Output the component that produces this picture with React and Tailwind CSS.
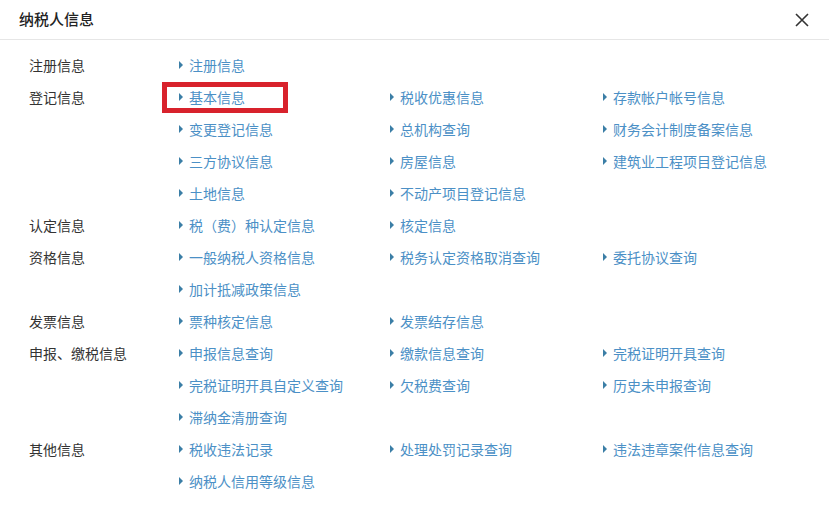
import React from 'react';

// ── Data ──────────────────────────────────────────────────────────────────────
const SECTIONS = [
  { title: '注册信息', items: ['注册信息'] },
  {
    title: '登记信息',
    items: [
      '基本信息', '税收优惠信息', '存款帐户帐号信息',
      '变更登记信息', '总机构查询', '财务会计制度备案信息',
      '三方协议信息', '房屋信息', '建筑业工程项目登记信息',
      '土地信息', '不动产项目登记信息',
    ],
  },
  { title: '认定信息', items: ['税（费）种认定信息', '核定信息'] },
  { title: '资格信息', items: ['一般纳税人资格信息', '税务认定资格取消查询', '委托协议查询', '加计抵减政策信息'] },
  { title: '发票信息', items: ['票种核定信息', '发票结存信息'] },
  {
    title: '申报、缴税信息',
    items: [
      '申报信息查询', '缴款信息查询', '完税证明开具查询',
      '完税证明开具自定义查询', '欠税费查询', '历史未申报查询',
      '滞纳金清册查询',
    ],
  },
  { title: '其他信息', items: ['税收违法记录', '处理处罚记录查询', '违法违章案件信息查询', '纳税人信用等级信息'] },
];

// ── Link item ─────────────────────────────────────────────────────────────────
function Item({ label }) {
  const active = label === '基本信息';
  return (
    <div className="h-8 flex items-center">
      <div
        className={`flex items-center ${
          active ? 'h-[31px] w-[126px] border-[5px] border-[#d8222c] -ml-[17px] pl-[12px]' : ''
        }`}
      >
        <span className="w-0 h-0 border-y-[4px] border-y-transparent border-l-[4px] border-l-[#3b7ea6] mr-[6px]" />
        <span className="text-[14px] text-[#4b90c6]">{label}</span>
      </div>
    </div>
  );
}

// ── Main ──────────────────────────────────────────────────────────────────────
export default function App() {
  return (
    <div
      className="w-[829px] h-[508px] bg-white overflow-hidden"
      style={{ fontFamily: '"Noto Sans CJK SC", "Noto Sans", sans-serif' }}
    >
      {/* header */}
      <div className="h-10 border-b border-[#e6e6e6] flex items-center justify-between pl-[19px] pr-[20px]">
        <span className="text-[15px] font-medium text-[#222]">纳税人信息</span>
        <svg className="w-[14px] h-[14px] text-[#333]" viewBox="0 0 14 14" fill="none" stroke="currentColor" strokeWidth={1.6}>
          <path d="M1 1l12 12M13 1L1 13" />
        </svg>
      </div>

      {/* body */}
      <div className="pt-[9px] pl-[29px]">
        {SECTIONS.map((sec) => (
          <div key={sec.title} className="flex">
            <div className="w-[150px] h-8 flex items-center text-[14px] text-[#333]">{sec.title}</div>
            <div className="grid grid-cols-[211px_213px_1fr] flex-1">
              {sec.items.map((it) => (
                <Item key={it} label={it} />
              ))}
            </div>
          </div>
        ))}
      </div>
    </div>
  );
}
